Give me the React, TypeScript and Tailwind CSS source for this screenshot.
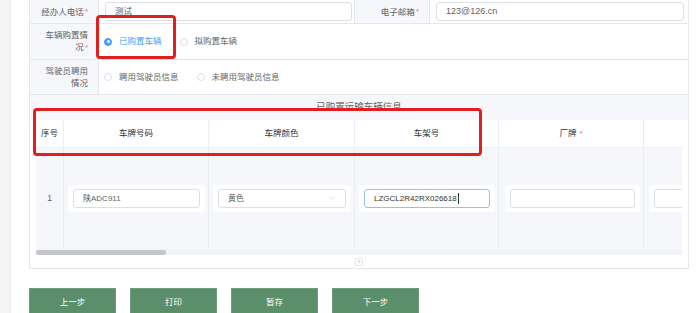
import { ChevronDown } from "lucide-react";

const Req = () => <span className="text-[#f56c6c] ml-[1px] text-[8px]">*</span>;

const Radio = ({ checked, label }: { checked?: boolean; label: string }) => (
  <div className="flex items-center mr-[18px]">
    {checked ? (
      <span className="w-[8px] h-[8px] rounded-full border border-[#409eff] bg-[#409eff] flex items-center justify-center">
        <span className="w-[3px] h-[3px] rounded-full bg-white" />
      </span>
    ) : (
      <span className="w-[8px] h-[8px] rounded-full border border-[#dcdfe6] bg-white" />
    )}
    <span className={`ml-[7px] ${checked ? "text-[#409eff]" : "text-[#666]"}`}>{label}</span>
  </div>
);

const Label = ({ children, className = "" }: { children: React.ReactNode; className?: string }) => (
  <div className={`bg-[#f5f7fa] flex items-center justify-end text-right pr-[10px] leading-[12px] text-[#606266] ${className}`}>
    {children}
  </div>
);

const CellInput = ({ value, focused, select }: { value?: string; focused?: boolean; select?: boolean }) => (
  <div className="w-full bg-white rounded-[3px] px-[5px] py-[4px]">
    <div
      className={`h-[19px] rounded-[3px] border bg-white flex items-center px-[9px] text-[8px] ${
        focused ? "border-[#93c2ea] text-[#333]" : "border-[#dcdfe6] text-[#606266]"
      }`}
    >
      <span>{value}</span>
      {focused && <span className="w-[1px] h-[11px] bg-[#333] ml-[1px]" />}
      {select && <ChevronDown className="ml-auto w-[9px] h-[9px] text-[#c0c4cc]" strokeWidth={1.2} />}
    </div>
  </div>
);

export default function App() {
  const headers = [
    { t: "序号" },
    { t: "车牌号码" },
    { t: "车牌颜色" },
    { t: "车架号" },
    { t: "厂牌", req: true },
    { t: "" },
  ];

  return (
    <div className="relative w-[700px] h-[313px] overflow-hidden bg-white flex text-[8.5px] font-['Liberation_Sans','Noto_Sans_CJK_SC',sans-serif]">
      <div className="w-[11px] shrink-0 bg-[#f5f5f5] border-r border-[#ececec]" />

      <div className="pl-[18px] flex flex-col">
        <div className="w-[660px] h-[269px] border border-t-0 border-[#e4e7ed] flex flex-col">
          {/* row 1 */}
          <div className="h-[24px] flex border-b border-[#e4e7ed] shrink-0">
            <Label className="w-[69px] border-r border-[#e4e7ed]">
              经办人电话<Req />
            </Label>
            <div className="w-[255px] pl-[6px] pr-[2px] flex items-center">
              <div className="w-full h-[19px] border border-[#dcdfe6] rounded-[3px] flex items-center px-[9px] text-[#606266]">
                测试
              </div>
            </div>
            <Label className="w-[76px] border-x border-[#e4e7ed] justify-center pr-0">
              电子邮箱<Req />
            </Label>
            <div className="flex-1 pl-[6px] pr-[4px] flex items-center">
              <div className="w-full h-[19px] border border-[#dcdfe6] rounded-[3px] flex items-center px-[9px] text-[#606266] text-[9px]">
                123@126.cn
              </div>
            </div>
          </div>

          {/* row 2 */}
          <div className="h-[36px] flex border-b border-[#e4e7ed] shrink-0">
            <Label className="w-[69px] border-r border-[#e4e7ed]">
              <span>
                车辆购置情
                <br />
                况<Req />
              </span>
            </Label>
            <div className="flex-1 flex items-center pl-[5px]">
              <Radio checked label="已购置车辆" />
              <Radio label="拟购置车辆" />
            </div>
          </div>

          {/* row 3 */}
          <div className="h-[35px] flex border-b border-[#e4e7ed] shrink-0">
            <Label className="w-[69px] border-r border-[#e4e7ed]">
              <span>
                驾驶员聘用
                <br />
                情况
              </span>
            </Label>
            <div className="flex-1 flex items-center pl-[5px]">
              <Radio label="聘用驾驶员信息" />
              <Radio label="未聘用驾驶员信息" />
            </div>
          </div>

          {/* vehicle table */}
          <div className="h-[25px] bg-[#f5f7fa] flex items-center justify-center text-[#606266] text-[9.5px] shrink-0">
            已购置运输车辆信息
          </div>
          <div className="px-[6px]">
            <div className="w-[646px] overflow-hidden">
              <div className="grid grid-cols-[28px_145px_146px_144px_145px_145px] w-[753px] h-[28px] bg-white border-b border-[#ebeef5] text-[#333]">
                {headers.map((h, i) => (
                  <div key={i} className="flex items-center justify-center border-r border-[#ebeef5]">
                    {h.t}
                    {h.req && <span className="text-[#f56c6c] ml-[3px] text-[8px]">*</span>}
                  </div>
                ))}
              </div>
              <div className="grid grid-cols-[28px_145px_146px_144px_145px_145px] w-[753px] h-[101px] bg-[#f5f7fa]">
                <div className="flex items-center justify-center border-r border-[#e9ecf1] text-[#606266] text-[8.5px]">1</div>
                <div className="flex items-center pl-[4px] pr-[3px] border-r border-[#e9ecf1]">
                  <CellInput value="陕ADC911" />
                </div>
                <div className="flex items-center pl-[4px] pr-[3px] border-r border-[#e9ecf1]">
                  <CellInput value="黄色" select />
                </div>
                <div className="flex items-center pl-[4px] pr-[3px] border-r border-[#e9ecf1]">
                  <CellInput value="LZGCL2R42RX026618" focused />
                </div>
                <div className="flex items-center pl-[6px] pr-[3px] border-r border-[#e9ecf1]">
                  <CellInput />
                </div>
                <div className="flex items-center pl-[5px] pr-[3px]">
                  <CellInput />
                </div>
              </div>
            </div>
            <div className="w-[646px] h-[6px] bg-[#f3f4f6] flex items-center">
              <div className="w-[130px] h-[5px] rounded-full bg-[#c4c6ca]" />
            </div>
          </div>
          <div className="h-[13px] flex items-center justify-center">
            <span className="w-[8px] h-[8px] border border-[#e4e7ed] rounded-[1px] flex items-center justify-center text-[#c0c4cc] text-[7px] leading-none">
              +
            </span>
          </div>
        </div>

        <div className="mt-[19px] flex gap-[14px]">
          {["上一步", "打印", "暂存", "下一步"].map((b) => (
            <button
              key={b}
              className="w-[87px] h-[28px] bg-[#5b8e6a] border border-[#6f9c7c] text-white text-[8.5px] flex items-center justify-center"
            >
              {b}
            </button>
          ))}
        </div>
      </div>

      {/* red annotation boxes */}
      <div className="absolute left-[96px] top-[15px] w-[80px] h-[44px] border-[3px] border-[#e0201f] rounded-[4px]" />
      <div className="absolute left-[33px] top-[108px] w-[449px] h-[48px] border-[3px] border-[#e0201f] rounded-[4px]" />
    </div>
  );
}
